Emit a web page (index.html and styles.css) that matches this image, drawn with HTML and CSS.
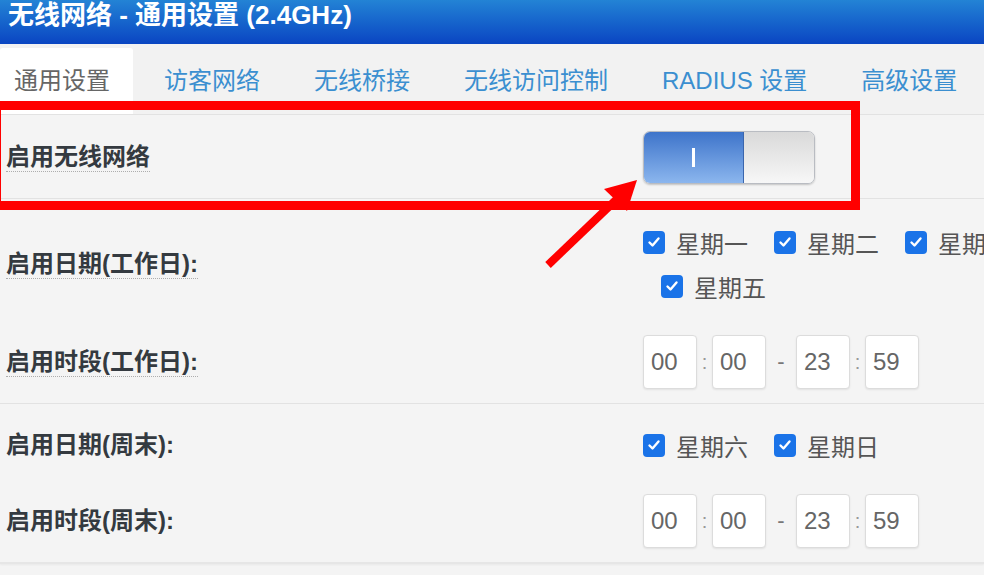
FILE: index.html
```html
<!DOCTYPE html>
<html lang="zh-CN">
<head>
  <meta charset="utf-8">
  <title>无线网络 - 通用设置 (2.4GHz)</title>
  <link rel="stylesheet" href="styles.css">
</head>
<body>
  <div class="page">
    <div class="title-bar">无线网络 - 通用设置 (2.4GHz)</div>

    <ul class="tabs">
      <li class="tab active">通用设置</li>
      <li class="tab">访客网络</li>
      <li class="tab">无线桥接</li>
      <li class="tab">无线访问控制</li>
      <li class="tab">RADIUS 设置</li>
      <li class="tab">高级设置</li>
    </ul>

    <form class="settings">
      <div class="group">
        <div class="row main">
          <span class="label tip">启用无线网络</span>
          <div class="toggle">
            <span class="toggle-on"><i></i></span>
            <span class="toggle-off"></span>
          </div>
        </div>
      </div>

      <div class="group">
        <div class="row days">
          <span class="label tip">启用日期(工作日):</span>
          <div class="ctrl">
            <div class="checks">
              <label class="check"><span class="box"><svg viewBox="0 0 16 16"><path d="M3.5 8.5l3 3 6-7"/></svg></span>星期一</label>
              <label class="check"><span class="box"><svg viewBox="0 0 16 16"><path d="M3.5 8.5l3 3 6-7"/></svg></span>星期二</label>
              <label class="check"><span class="box"><svg viewBox="0 0 16 16"><path d="M3.5 8.5l3 3 6-7"/></svg></span>星期三</label>
              <label class="check"><span class="box"><svg viewBox="0 0 16 16"><path d="M3.5 8.5l3 3 6-7"/></svg></span>星期四</label>
            </div>
            <div class="checks wrapped">
              <label class="check"><span class="box"><svg viewBox="0 0 16 16"><path d="M3.5 8.5l3 3 6-7"/></svg></span>星期五</label>
            </div>
          </div>
        </div>
        <div class="row times">
          <span class="label tip">启用时段(工作日):</span>
          <div class="time">
            <input class="field" type="text" value="00">
            <span class="sep">:</span>
            <input class="field" type="text" value="00">
            <span class="dash">-</span>
            <input class="field" type="text" value="23">
            <span class="sep">:</span>
            <input class="field" type="text" value="59">
          </div>
        </div>
      </div>

      <div class="group">
        <div class="row days">
          <span class="label">启用日期(周末):</span>
          <div class="ctrl">
            <div class="checks">
              <label class="check"><span class="box"><svg viewBox="0 0 16 16"><path d="M3.5 8.5l3 3 6-7"/></svg></span>星期六</label>
              <label class="check"><span class="box"><svg viewBox="0 0 16 16"><path d="M3.5 8.5l3 3 6-7"/></svg></span>星期日</label>
            </div>
          </div>
        </div>
        <div class="row times">
          <span class="label">启用时段(周末):</span>
          <div class="time">
            <input class="field" type="text" value="00">
            <span class="sep">:</span>
            <input class="field" type="text" value="00">
            <span class="dash">-</span>
            <input class="field" type="text" value="23">
            <span class="sep">:</span>
            <input class="field" type="text" value="59">
          </div>
        </div>
      </div>
    </form>

    <!-- 标注：红框 + 箭头 -->
    <div class="mark-box"></div>
    <svg class="mark-arrow" viewBox="0 0 984 575">
      <line x1="548" y1="265" x2="618" y2="198" />
      <polygon points="637,180 604,189 627,211" />
    </svg>
  </div>
</body>
</html>
```

FILE: styles.css
```css
body {
  margin: 0;
  background-color: #f4f4f4;
  font-family: "Liberation Sans", "Noto Sans CJK SC", sans-serif;
  overflow: hidden;
}

.page {
  position: relative;
  width: 984px;
  height: 575px;
  overflow: hidden;
}

.title-bar {
  height: 44px;
  box-sizing: border-box;
  padding: 1px 8px 0;
  line-height: 28px;
  font-size: 26px;
  font-weight: bold;
  color: #fff;
  background: linear-gradient(to bottom, #2383d5 0%, #1664cc 50%, #0a45c2 100%);
  white-space: nowrap;
}

.tabs {
  display: flex;
  gap: 8px;
  margin: 0;
  padding: 4px 0 0;
  list-style: none;
  background-color: #f2f2f2;
  border-bottom: 1px solid #e2e2e2;
  white-space: nowrap;
}

.tab {
  height: 66px;
  line-height: 66px;
  padding: 0 23px;
  font-size: 24px;
  color: #3b8fd0;
}

.tab:first-child {
  padding-left: 14px;
}

.tab.active {
  background-color: #fff;
  color: #666;
  border-radius: 3px 3px 0 0;
}

.settings {
  margin: 0;
}

.group {
  border-bottom: 1px solid #e2e2e2;
}

.group:last-child {
  border-bottom: 2px solid #e6e6e6;
  box-shadow: 0 1px 2px rgba(0, 0, 0, 0.05);
}

.row {
  display: grid;
  grid-template-columns: 643px auto;
  align-items: center;
}

.row.main {
  padding: 16px 0 14px;
}

.row.days {
  padding-top: 21px;
}

.group:last-child .row.days {
  padding-top: 19px;
}

.row.times {
  padding: 27px 0 14px;
}

.label {
  justify-self: start;
  margin-left: 6px;
  line-height: 28px;
  font-size: 24px;
  font-weight: bold;
  color: #343a40;
  white-space: nowrap;
}

.label.tip {
  border-bottom: 1px dotted #adadad;
}

/* 开关 */
.toggle {
  display: flex;
  width: 172px;
  height: 53px;
  box-sizing: border-box;
  border: 1px solid #b9bcc2;
  border-radius: 7px;
  overflow: hidden;
  box-shadow: 0 1px 2px rgba(0, 0, 0, 0.2);
}

.toggle-on {
  display: flex;
  justify-content: center;
  align-items: center;
  width: 99px;
  background: linear-gradient(to bottom, #3e74ca, #8bb6ee);
  border-right: 1px solid #3b66ad;
}

.toggle-on i {
  width: 3px;
  height: 19px;
  background-color: #fff;
}

.toggle-off {
  flex: 1;
  background: linear-gradient(to bottom, #d9d9d9, #f7f7f7);
}

/* 复选框 */
.checks {
  display: flex;
  white-space: nowrap;
}

.checks.wrapped {
  padding-left: 18px;
}

.check {
  display: flex;
  align-items: center;
  gap: 11px;
  height: 44px;
  margin-right: 26px;
  font-size: 24px;
  color: #555;
}

.box {
  display: flex;
  justify-content: center;
  align-items: center;
  width: 22px;
  height: 23px;
  border-radius: 4px;
  background-color: #1a73e8;
}

.box svg {
  width: 16px;
  height: 16px;
  fill: none;
  stroke: #fff;
  stroke-width: 2.4;
  stroke-linecap: round;
  stroke-linejoin: round;
}

/* 时间输入 */
.time {
  display: flex;
  align-items: center;
}

.field {
  width: 54px;
  height: 54px;
  box-sizing: border-box;
  margin: 0;
  padding: 0 0 0 7px;
  border: 1px solid #dcdcdc;
  border-radius: 4px;
  background-color: #fff;
  font-family: inherit;
  font-size: 24px;
  color: #666;
  box-shadow: 0 1px 2px rgba(0, 0, 0, 0.08);
}

.sep {
  width: 15px;
  text-align: center;
  font-size: 20px;
  color: #999;
}

.dash {
  width: 30px;
  text-align: center;
  font-size: 22px;
  color: #777;
}

/* 标注 */
.mark-box {
  position: absolute;
  left: -8px;
  top: 101px;
  width: 868px;
  height: 109px;
  box-sizing: border-box;
  border: 9px solid #ff0000;
}

.mark-arrow {
  position: absolute;
  left: 0;
  top: 0;
  width: 984px;
  height: 575px;
  pointer-events: none;
}

.mark-arrow line {
  stroke: #ff0000;
  stroke-width: 8;
}

.mark-arrow polygon {
  fill: #ff0000;
}
```
